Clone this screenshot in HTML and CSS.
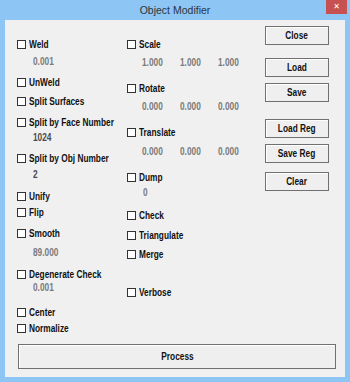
FILE: index.html
```html
<!DOCTYPE html>
<html lang="en">
<head>
    <meta charset="UTF-8">
    <title>Object Modifier</title>
    <link rel="stylesheet" href="styles.css">
</head>
<body>

    <!-- Dialog window -->
    <div class="window">
        <div class="titlebar">
            <span class="title">Object Modifier</span>
            <span class="close-x">&#x2715;</span>
        </div>

        <div class="client">
            <div class="columns">
                <!-- Left options -->
                <div class="col col-left">
                    <div class="opt"><span class="box"></span><span class="txt">Weld</span></div>
                    <div class="val sp-4"><span class="txt">0.001</span></div>
                    <div class="opt sp-8"><span class="box"></span><span class="txt">UnWeld</span></div>
                    <div class="opt sp-6"><span class="box"></span><span class="txt">Split Surfaces</span></div>
                    <div class="opt sp-8"><span class="box"></span><span class="txt">Split by Face Number</span></div>
                    <div class="val dark sp-2"><span class="txt">1024</span></div>
                    <div class="opt sp-8"><span class="box"></span><span class="txt">Split by Obj Number</span></div>
                    <div class="val dark sp-3"><span class="txt">2</span></div>
                    <div class="opt sp-9"><span class="box"></span><span class="txt">Unify</span></div>
                    <div class="opt sp-3"><span class="box"></span><span class="txt">Flip</span></div>
                    <div class="opt sp-8"><span class="box"></span><span class="txt">Smooth</span></div>
                    <div class="val sp-6"><span class="txt">89.000</span></div>
                    <div class="opt sp-9"><span class="box"></span><span class="txt">Degenerate Check</span></div>
                    <div class="val"><span class="txt">0.001</span></div>
                    <div class="opt sp-12"><span class="box"></span><span class="txt">Center</span></div>
                    <div class="opt sp-3"><span class="box"></span><span class="txt">Normalize</span></div>
                </div>

                <!-- Middle options -->
                <div class="col col-mid">
                    <div class="opt"><span class="box"></span><span class="txt">Scale</span></div>
                    <div class="val triple sp-5"><span class="txt">1.000</span><span class="txt">1.000</span><span class="txt">1.000</span></div>
                    <div class="opt sp-13"><span class="box"></span><span class="txt">Rotate</span></div>
                    <div class="val triple sp-5"><span class="txt">0.000</span><span class="txt">0.000</span><span class="txt">0.000</span></div>
                    <div class="opt sp-13"><span class="box"></span><span class="txt">Translate</span></div>
                    <div class="val triple sp-6"><span class="txt">0.000</span><span class="txt">0.000</span><span class="txt">0.000</span></div>
                    <div class="opt sp-13"><span class="box"></span><span class="txt">Dump</span></div>
                    <div class="val single sp-2"><span class="txt">0</span></div>
                    <div class="opt sp-10"><span class="box"></span><span class="txt">Check</span></div>
                    <div class="opt sp-7"><span class="box"></span><span class="txt">Triangulate</span></div>
                    <div class="opt sp-6"><span class="box"></span><span class="txt">Merge</span></div>
                    <div class="opt sp-25"><span class="box"></span><span class="txt">Verbose</span></div>
                </div>

                <!-- Buttons -->
                <div class="col col-buttons">
                    <button class="btn"><span class="txt">Close</span></button>
                    <button class="btn sp-13"><span class="txt">Load</span></button>
                    <button class="btn sp-6"><span class="txt">Save</span></button>
                    <button class="btn sp-17"><span class="txt">Load Reg</span></button>
                    <button class="btn sp-6"><span class="txt">Save Reg</span></button>
                    <button class="btn sp-9"><span class="txt">Clear</span></button>
                </div>
            </div>

            <button class="btn btn-process"><span class="txt">Process</span></button>
        </div>
    </div>

</body>
</html>
```

FILE: styles.css
```css
/* Reset */
* {
    margin: 0;
    padding: 0;
    box-sizing: border-box;
}

body {
    width: 350px;
    height: 382px;
    background-color: #8dc5f4;
    font-family: "Liberation Sans", Arial, sans-serif;
    font-size: 10px;
    font-weight: bold;
    color: #111;
    overflow: hidden;
}

/* Window frame */
.window {
    height: 382px;
    display: flex;
    flex-direction: column;
}

.titlebar {
    height: 20px;
    position: relative;
    text-align: center;
}

.title {
    font-family: "Liberation Sans", Arial, sans-serif;
    font-weight: normal;
    font-size: 10.5px;
    line-height: 20px;
    color: #2b3540;
}

.close-x {
    position: absolute;
    top: 0;
    right: 3px;
    width: 21px;
    height: 14px;
    background-color: #c75050;
    color: #fff;
    font-family: "DejaVu Sans", sans-serif;
    font-size: 8px;
    line-height: 14px;
    text-align: center;
}

/* Client area */
.client {
    flex: 1;
    margin: 0 5px 5px 5px;
    background-color: #f0f0f0;
    display: flex;
    flex-direction: column;
    padding-bottom: 8px;
}

.columns {
    display: flex;
}

.col {
    padding-top: 18px;
}

.col-left {
    width: 122px;
    padding-left: 12px;
}

.col-mid {
    width: 138px;
}

.col-buttons {
    padding-top: 6px;
    display: flex;
    flex-direction: column;
}

/* Condensed look of the old dialog font */
.txt {
    display: inline-block;
    transform: scaleX(0.83);
    transform-origin: left center;
    white-space: nowrap;
}

/* Checkbox rows */
.opt {
    height: 13px;
    line-height: 13px;
    display: flex;
    align-items: center;
    white-space: nowrap;
}

.box {
    width: 9px;
    height: 9px;
    border: 1px solid #333;
    background-color: #fff;
    margin-right: 3px;
    flex-shrink: 0;
}

/* Value fields */
.val {
    height: 13px;
    line-height: 13px;
    padding-left: 16px;
    color: #7a7a7a;
}

.val.dark {
    color: #4a4a4a;
}

.val.triple {
    display: flex;
    padding-left: 15px;
}

.val.triple .txt {
    width: 38px;
}

/* Buttons */
.btn {
    width: 64px;
    height: 19px;
    border: 1px solid #707070;
    background-color: #efefef;
    box-shadow: inset 1px 1px 0 #fff;
    font-family: inherit;
    font-size: 10px;
    font-weight: bold;
    color: #111;
}

.btn .txt {
    transform-origin: center center;
}

.btn-process {
    margin: auto 9px 0 13px;
    width: auto;
    height: 25px;
}

/* Spacing helpers */
.sp-2 { margin-top: 2px; }
.sp-3 { margin-top: 3px; }
.sp-4 { margin-top: 4px; }
.sp-5 { margin-top: 5px; }
.sp-6 { margin-top: 6px; }
.sp-7 { margin-top: 7px; }
.sp-8 { margin-top: 8px; }
.sp-9 { margin-top: 9px; }
.sp-10 { margin-top: 10px; }
.sp-12 { margin-top: 12px; }
.sp-13 { margin-top: 13px; }
.sp-17 { margin-top: 17px; }
.sp-25 { margin-top: 25px; }
```
